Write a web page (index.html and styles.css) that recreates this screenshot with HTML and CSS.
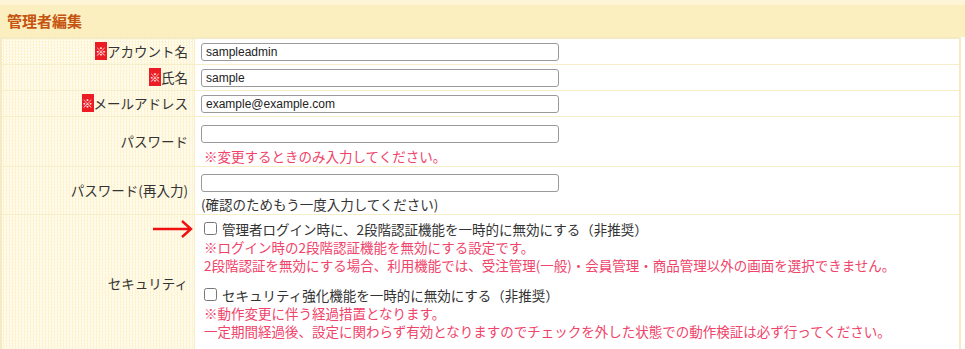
FILE: index.html
```html
<!DOCTYPE html>
<html lang="ja">
<head>
<meta charset="utf-8">
<link rel="stylesheet" href="styles.css">
</head>
<body>
<div class="page">
  <h2 class="title">管理者編集</h2>
  <table class="form">
    <tr class="r1">
      <th><span class="req">※</span>アカウント名</th>
      <td><input class="txt" type="text" value="sampleadmin"></td>
    </tr>
    <tr class="r1">
      <th><span class="req">※</span>氏名</th>
      <td><input class="txt" type="text" value="sample"></td>
    </tr>
    <tr class="r1">
      <th><span class="req">※</span>メールアドレス</th>
      <td><input class="txt" type="text" value="example@example.com"></td>
    </tr>
    <tr class="r4">
      <th>パスワード</th>
      <td><input class="txt" type="password" value=""><div class="note">※変更するときのみ入力してください。</div></td>
    </tr>
    <tr class="r5">
      <th>パスワード(再入力)</th>
      <td><input class="txt" type="password" value=""><div class="plain">(確認のためもう一度入力してください)</div></td>
    </tr>
    <tr class="r6">
      <th>セキュリティ
        <svg class="arrow" width="42" height="20" viewBox="0 0 42 20"><path d="M1 10 H39 M30 2 L39 10 L30 18" fill="none" stroke="#f01010" stroke-width="2.4"/></svg>
      </th>
      <td>
        <div class="block">
          <label class="chk"><input type="checkbox"> 管理者ログイン時に、2段階認証機能を一時的に無効にする（非推奨）</label>
          <div class="note">※ログイン時の2段階認証機能を無効にする設定です。<br>2段階認証を無効にする場合、利用機能では、受注管理(一般)・会員管理・商品管理以外の画面を選択できません。</div>
        </div>
        <div class="block">
          <label class="chk"><input type="checkbox"> セキュリティ強化機能を一時的に無効にする（非推奨）</label>
          <div class="note">※動作変更に伴う経過措置となります。<br>一定期間経過後、設定に関わらず有効となりますのでチェックを外した状態での動作検証は必ず行ってください。</div>
        </div>
      </td>
    </tr>
  </table>
</div>
</body>
</html>
```
FILE: styles.css
```css
html, body {
  margin: 0;
  padding: 0;
  background: #ffffff;
}
body {
  font-family: "Noto Sans CJK JP", "Noto Sans", sans-serif;
  font-size: 13.5px;
  color: #333333;
}
.page {
  width: 965px;
}
.title {
  margin: 0;
  height: 32px;
  border-top: 5px solid #fdf5d6;
  background: #fbefbf;
  color: #c45410;
  font-size: 15px;
  font-weight: bold;
  line-height: 32px;
  padding-left: 7px;
}
.form {
  width: 961px;
  border-collapse: collapse;
  border: 2px solid #f4ebc4;
}
.form th, .form td {
  border: 1px solid #f6eec9;
  padding: 0;
}
.form th {
  width: 186px;
  text-align: right;
  font-weight: normal;
  padding-right: 6px;
  vertical-align: middle;
  position: relative;
  background-color: #fffbe9;
  background-image: repeating-conic-gradient(#fdf3cf 0 25%, #fffdf4 0 50%);
  background-size: 3px 3px;
  line-height: 18px;
}
.form td {
  background: #ffffff;
  padding-left: 6px;
  vertical-align: top;
}
.r1 { height: 26px; }
.r1 td { padding-top: 4px; }
.r4 { height: 50px; }
.r4 td { padding-top: 8px; }
.r5 { height: 48px; }
.r5 td { padding-top: 7px; }
.r6 { height: 130px; }
.r6 td { padding-top: 5px; }
.req {
  display: inline-block;
  background: #ec1c24;
  color: #ffffff;
  font-size: 11px;
  width: 12px;
  height: 18px;
  line-height: 18px;
  text-align: center;
  vertical-align: top;
}
.txt {
  box-sizing: border-box;
  width: 358px;
  height: 18px;
  margin: 0;
  padding: 0 4px;
  border: 1px solid #9a9a9a;
  border-radius: 3px;
  font-family: "Liberation Sans", Arial, sans-serif;
  font-size: 12px;
  color: #222;
  display: block;
}
.note {
  color: #f0436a;
  line-height: 18px;
  padding-left: 3px;
}
.r4 .note { margin-top: 4px; }
.plain {
  line-height: 18px;
  margin-top: 3px;
}
.block {
  margin-bottom: 12px;
}
.chk {
  display: flex;
  align-items: center;
  line-height: 18px;
  padding-left: 3px;
}
.chk input {
  width: 13px;
  height: 13px;
  margin: 0 5px 0 0;
}
.arrow {
  position: absolute;
  left: 150px;
  top: 4px;
}
```
